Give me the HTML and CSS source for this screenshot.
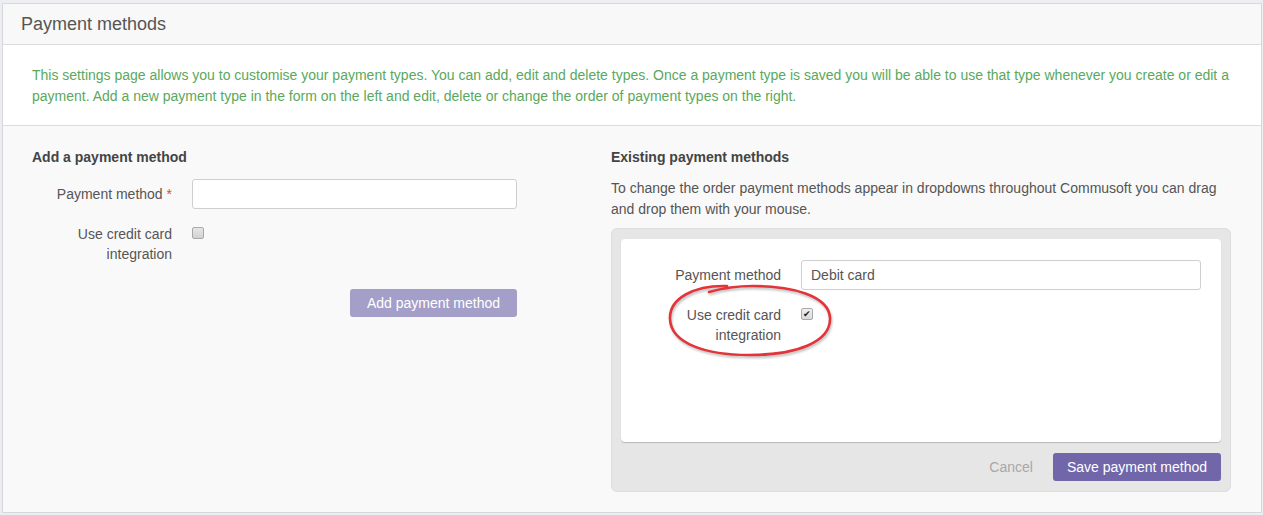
FILE: index.html
```html
<!DOCTYPE html>
<html>
<head>
    <title>Payment methods</title>
    <link rel="stylesheet" href="styles.css">
</head>
<body>
    <div class="panel">
        <div class="panel-heading">Payment methods</div>

        <div class="panel-intro">
            This settings page allows you to customise your payment types. You can add, edit and delete types. Once a payment type is saved you will be able to use that type whenever you create or edit a payment. Add a new payment type in the form on the left and edit, delete or change the order of payment types on the right.
        </div>

        <div class="panel-body">
            <div class="col-left">
                <h4>Add a payment method</h4>

                <div class="form-row">
                    <label class="form-label">Payment method <span class="required">*</span></label>
                    <input type="text" class="form-input">
                </div>

                <div class="form-row check-row">
                    <label class="form-label">Use credit card integration</label>
                    <span class="check"></span>
                </div>

                <div class="form-actions">
                    <button class="btn btn-disabled">Add payment method</button>
                </div>
            </div>

            <div class="col-right">
                <h4>Existing payment methods</h4>
                <p class="help">To change the order payment methods appear in dropdowns throughout Commusoft you can drag and drop them with your mouse.</p>

                <div class="sortable-box">
                    <div class="method-card">
                        <div class="form-row">
                            <label class="form-label">Payment method</label>
                            <input type="text" class="form-input wide" value="Debit card">
                        </div>
                        <div class="form-row check-row">
                            <label class="form-label">Use credit card integration</label>
                            <span class="check checked">&#10004;</span>
                        </div>

                        <!-- annotation ring drawn over the screenshot -->
                        <svg class="ring" width="180" height="80" viewBox="0 0 180 80">
                            <path d="M62 4 C 30 3, 4 16, 5 37 C 6 62, 42 73, 84 73 C 132 73, 166 60, 165 36 C 164 14, 128 4, 88 4 C 72 4, 58 6, 44 10"
                                  fill="none" stroke="#e3343a" stroke-width="2.6" stroke-linecap="round"/>
                        </svg>
                    </div>
                    <div class="box-footer">
                        <a class="cancel">Cancel</a>
                        <button class="btn btn-primary">Save payment method</button>
                    </div>
                </div>
            </div>
        </div>
    </div>
</body>
</html>
```

FILE: styles.css
```css
body {
    margin: 0;
    background: #eceef1;
    font-family: "Liberation Sans", Arial, sans-serif;
    font-size: 14px;
    color: #555;
}
.panel {
    margin: 3px 1px 0 2px;
    border: 1px solid #d6d8db;
    background: #f9f9f9;
}
.panel-heading {
    height: 40px;
    line-height: 40px;
    padding-left: 18px;
    font-size: 18px;
    color: #555;
    background: #f8f8f8;
    border-bottom: 1px solid #dcdcdc;
}
.panel-intro {
    background: #fff;
    color: #5aa85c;
    line-height: 21px;
    padding: 20px 29px 18px 29px;
    border-bottom: 1px solid #dcdcdc;
}
.panel-body {
    display: grid;
    grid-template-columns: 559px 620px;
    column-gap: 20px;
    padding: 21px 29px 20px 29px;
}
h4 {
    margin: 0;
    font-size: 14px;
    line-height: 20px;
    font-weight: bold;
    color: #444;
}
.col-left h4 { margin-bottom: 12px; }

.form-row {
    display: flex;
    align-items: center;
    gap: 20px;
}
.form-label {
    width: 140px;
    flex: none;
    text-align: right;
    line-height: 20px;
    color: #555;
}
.required { color: #e04848; }
.form-input {
    width: 325px;
    height: 30px;
    box-sizing: border-box;
    border: 1px solid #cfcfcf;
    border-radius: 3px;
    padding: 0 9px;
    font-family: inherit;
    font-size: 14px;
    color: #555;
    background: #fff;
}
.form-input.wide { width: 400px; height: 30px; }

.check-row {
    align-items: flex-start;
    margin-top: 15px;
}
.check {
    width: 12px;
    height: 12px;
    margin-top: 3px;
    box-sizing: border-box;
    border: 1px solid #a9a9a9;
    border-radius: 2px;
    background: linear-gradient(#e6e6e6, #d2d2d2);
    font-size: 9px;
    line-height: 10px;
    text-align: center;
    color: #222;
}
.check.checked { background: linear-gradient(#f0f0f0, #dadada); }

.form-actions {
    width: 485px;
    display: flex;
    justify-content: flex-end;
    margin-top: 25px;
}
.btn {
    border: none;
    border-radius: 3px;
    color: #fff;
    font-family: inherit;
    font-size: 14px;
    height: 28px;
    padding: 0 17px;
}
.btn-disabled { background: #a39fc8; }
.btn-primary { background: #7066a9; padding: 0 14px; }

.help {
    margin: 11px 0 8px 0;
    line-height: 21px;
    color: #555;
}
.sortable-box {
    background: #e6e6e6;
    border: 1px solid #dedede;
    border-radius: 6px;
    padding: 10px 9px 0 9px;
}
.method-card {
    position: relative;
    background: #fff;
    border-radius: 4px;
    box-shadow: 0 1px 1px #b8b8b8;
    height: 182px;
    padding: 21px 20px 0 20px;
}
.method-card .check-row { margin-top: 15px; }
.ring {
    position: absolute;
    left: 44px;
    top: 43px;
    filter: drop-shadow(1px 2px 1px rgba(0, 0, 0, 0.25));
}
.box-footer {
    display: flex;
    justify-content: flex-end;
    align-items: center;
    gap: 20px;
    padding: 11px 0 10px 0;
}
.cancel { color: #a8a8a8; }
```
